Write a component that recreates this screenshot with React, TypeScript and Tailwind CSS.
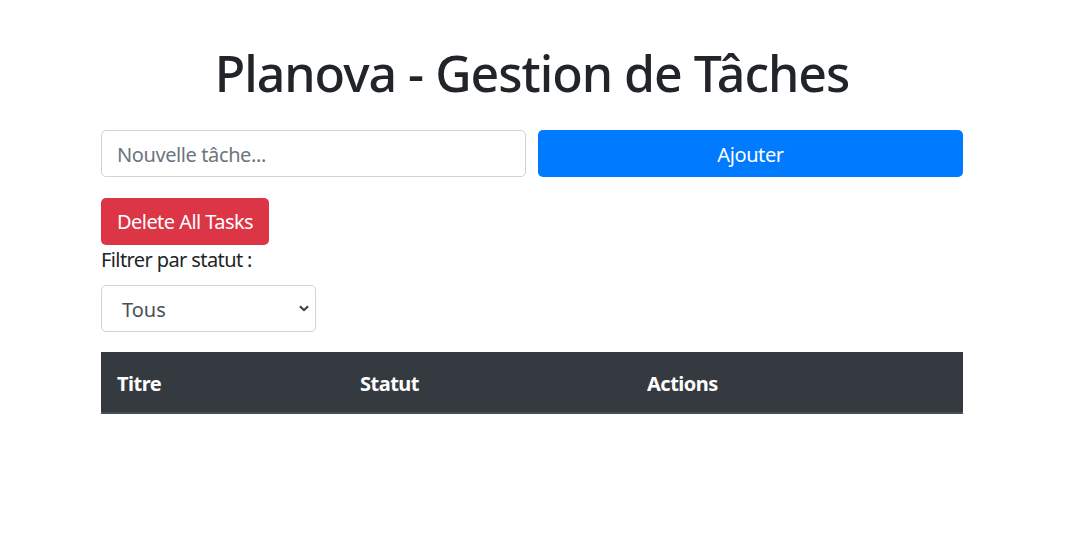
import React from "react";

const font = { fontFamily: '"Noto Sans", "Open Sans", sans-serif' };

export default function App() {
  return (
    <div className="w-[1079px] h-[550px] bg-white overflow-hidden" style={font}>
      <div className="w-[1064px]">
        <div className="w-[862px] mx-auto pt-[43px]">
          <h1 className="h-[60px] leading-[60px] text-center text-[50px] font-medium tracking-[-1px] text-[#212529] mb-[27px]">
            Planova - Gestion de Tâches
          </h1>
          <div className="flex gap-[12px] tracking-[-0.4px]">
            <input
              className="w-[425px] h-[47px] border border-[#ced4da] rounded-[5px] px-[15px] pt-[2px] text-[20px] text-[#495057] placeholder:text-[#6c757d] outline-none"
              placeholder="Nouvelle tâche..."
            />
            <button className="w-[425px] h-[47px] pt-[2px] rounded-[5px] bg-[#007bff] text-white text-[20px]">
              Ajouter
            </button>
          </div>
          <div className="mt-[21px] tracking-[-0.55px]">
            <button className="h-[47px] px-[16px] pt-[1px] rounded-[5px] bg-[#dc3545] text-white text-[20px]">
              Delete All Tasks
            </button>
          </div>
          <div className="text-[20px] leading-[30px] tracking-[-0.6px] text-[#212529] mb-[10px]">Filtrer par statut :</div>
          <div className="relative w-[215px] h-[47px] border border-[#ced4da] rounded-[5px] flex items-center">
            <span className="pl-[20px] pt-[2px] text-[20px] text-[#495057]">Tous</span>
            <svg className="absolute right-[6px] top-[19px]" width="10" height="7" viewBox="0 0 10 7">
              <path d="M1 1.2 L5 5.2 L9 1.2" fill="none" stroke="#3c3c3c" strokeWidth="2" />
            </svg>
          </div>
          <div className="mt-[20px] flex h-[62px] pt-[3px] bg-[#343a40] border-b-2 border-[#454d55] text-white text-[20px] font-bold tracking-[-0.5px]">
            <div className="w-[243px] pl-[16px] flex items-center">Titre</div>
            <div className="w-[287px] pl-[16px] flex items-center">Statut</div>
            <div className="flex-1 pl-[16px] flex items-center">Actions</div>
          </div>
        </div>
      </div>
    </div>
  );
}
